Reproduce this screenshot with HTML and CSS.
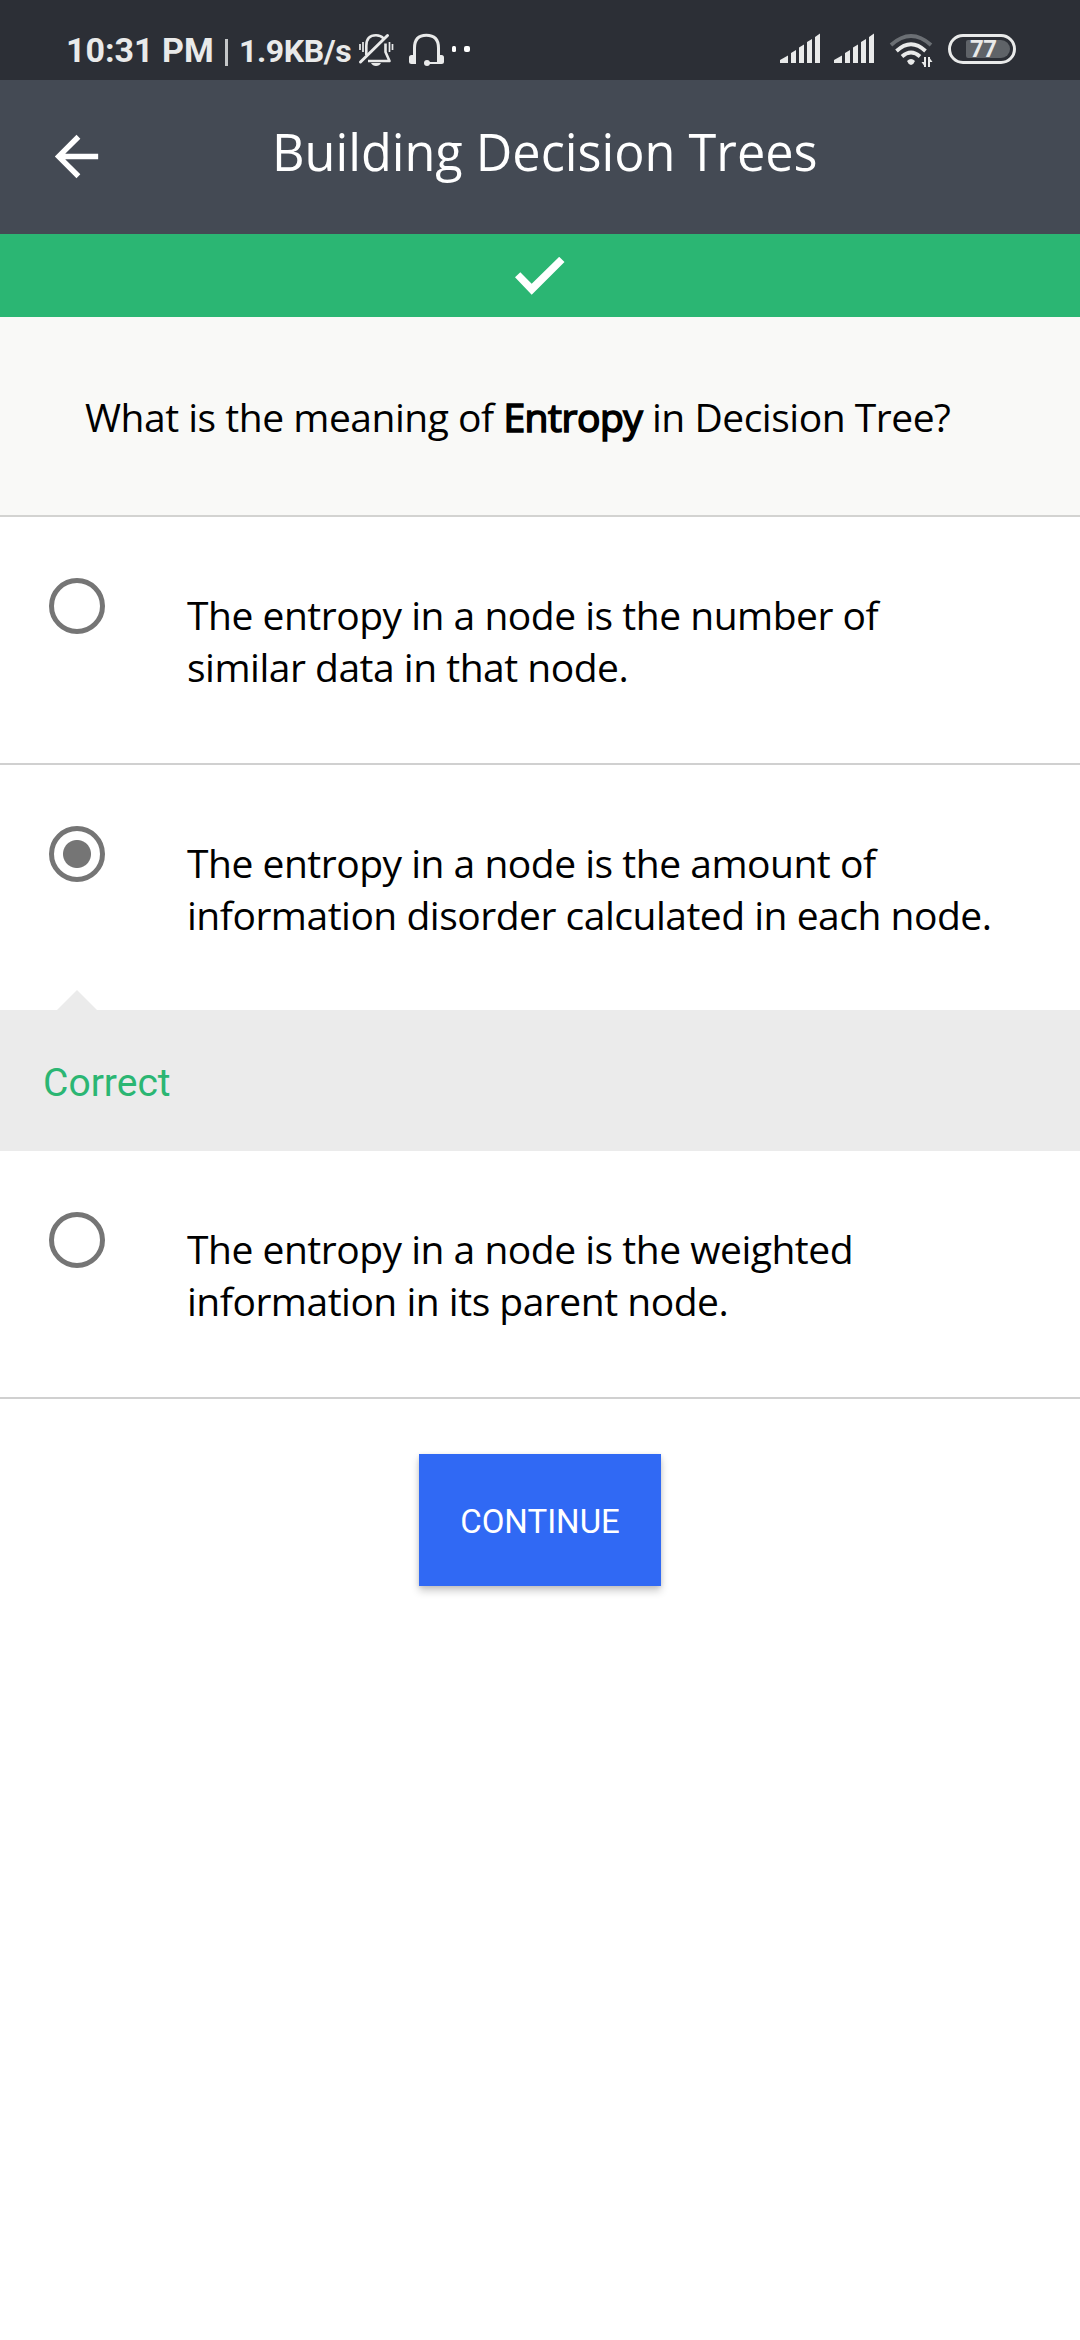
FILE: index.html
```html
<!DOCTYPE html>
<html lang="en">
<head>
<meta charset="utf-8">
<title>Building Decision Trees</title>
<link rel="stylesheet" href="styles.css">
</head>
<body>
<div class="status-bar">
  <span class="clock">10:31 PM</span>
  <span class="divider"></span>
  <span class="speed">1.9KB/s</span>
  <svg class="bell" width="36" height="34" viewBox="358 33 36 34" fill="none" stroke="#e9eaea" stroke-width="2.6">
    <path d="M366.300 55V46C366.300 38 370 35.300 376 35.300C379.500 35.300 382 36.600 383.700 38.500"/>
    <path d="M385.500 43.500V52L389.500 61H368" stroke-linejoin="round"/>
    <path d="M360.500 62L387.500 35.500" stroke-width="3" stroke-linecap="round"/>
    <path d="M360 44V50M363 42V52M389.500 42V52M392.500 44V50" stroke-width="1.700"/>
    <path d="M371 63H381Q379.500 66 376 66T371 63Z" fill="#e9eaea" stroke="none"/>
  </svg>
  <svg class="headset" width="36" height="34" viewBox="408 33 36 34" fill="none" stroke="#e9eaea" stroke-width="3">
    <path d="M414.500 64V48C414.500 39 419 35.300 426.300 35.300S438.500 39 438.500 48V64"/>
    <path d="M427 63H439" stroke-width="2"/>
    <rect x="409" y="55" width="7" height="9" rx="2.500" fill="#e9eaea" stroke="none"/>
    <rect x="437" y="55" width="7" height="9" rx="2.500" fill="#e9eaea" stroke="none"/>
    <circle cx="427" cy="63" r="3" fill="#e9eaea" stroke="none"/>
  </svg>
  <svg class="dots" width="20" height="8" viewBox="451 45 20 8" fill="#fff">
    <rect x="452" y="46" width="4" height="6" rx="1.500"/><rect x="464" y="46" width="6" height="6" rx="2"/>
  </svg>
  <svg class="signal" width="40" height="30" viewBox="0 33 40 30" fill="#e9eaea">
    <path d="M0 60L8 55.500V63H0ZM11 53L16 50V63H11ZM19 47.500L24 44.500V63H19ZM27 42L32 39V63H27ZM35 37L40 33.500V63H35Z"/>
  </svg>
  <svg class="signal" width="40" height="30" viewBox="0 33 40 30" fill="#e9eaea">
    <path d="M0 60L8 55.500V63H0ZM11 53L16 50V63H11ZM19 47.500L24 44.500V63H19ZM27 42L32 39V63H27ZM35 37L40 33.500V63H35Z"/>
  </svg>
  <svg class="wifi" width="44" height="35" viewBox="889 33 44 35" fill="none" stroke="#e9eaea" stroke-width="3.800">
    <path d="M891 45Q911 27 931 45" stroke="#6b6f74"/>
    <path d="M896.500 51Q911 37.500 925.500 51"/>
    <path d="M902 56.500Q911 48.500 920 56.500"/>
    <path d="M907 61Q911 57 915 61Q914 64 911 65Q908 64 907 61Z" fill="#e9eaea" stroke="none"/>
    <path d="M925 57V67M929 57V67" stroke-width="2"/>
    <path d="M921.500 62H925V67ZM932.500 62H929V57Z" fill="#e9eaea" stroke="none"/>
  </svg>
  <span class="battery"><span class="charge">77</span></span>
</div>
<header class="app-bar">
  <svg class="back" width="65" height="65" viewBox="0 0 24 24" fill="#fff"><path d="M20 11H7.830l5.590-5.590L12 4l-8 8 8 8 1.410-1.410L7.830 13H20z"/></svg>
  <h1 class="title">Building Decision Trees</h1>
</header>
<div class="result">
  <svg width="50" height="38" viewBox="515 257 50 38" fill="#fff"><path d="M515 277.300L520.300 272.300L531.700 283.700L559.200 256.800L564.500 262L531.700 294.800Z"/></svg>
</div>
<main>
  <p class="question">What is the meaning of <b>Entropy</b> in Decision Tree?</p>
  <div class="option">
    <span class="radio"></span>
    <p class="answer">The entropy in a node is the number of<br>similar data in that node.</p>
  </div>
  <div class="option option-selected">
    <span class="radio radio-on"></span>
    <p class="answer">The entropy in a node is the amount of<br>information disorder calculated in each node.</p>
  </div>
  <div class="feedback">Correct</div>
  <div class="option">
    <span class="radio"></span>
    <p class="answer">The entropy in a node is the weighted<br>information in its parent node.</p>
  </div>
  <div class="actions"><button class="continue">CONTINUE</button></div>
</main>
</body>
</html>
```
FILE: styles.css
```css
* { box-sizing: border-box; }
body {
  margin: 0;
  min-height: 2340px;
  background: #fff;
  color: #000;
  font-family: "Open Sans", sans-serif;
}
h1, p { margin: 0; font-weight: 400; }
svg { display: block; flex: none; }

.status-bar {
  display: flex;
  align-items: flex-start;
  height: 80px;
  padding: 33px 64px 0 66px;
  background: #2c2f36;
  color: #e9eaea;
  font-family: Roboto, sans-serif;
  font-weight: 700;
  white-space: nowrap;
}
.clock { width: 159px; font-size: 34px; line-height: 34px; }
.divider { width: 3px; height: 27px; margin-top: 6px; background: #c5c7c9; }
.speed { width: 118px; margin-left: 11px; font-size: 32px; line-height: 36px; letter-spacing: -0.4px; }
.bell { margin-left: 1px; }
.headset { margin-left: 14px; }
.dots { margin: 12px 0 0 7px; }
.signal { margin-right: 14px; }
.dots + .signal { margin-left: auto; }
.wifi { margin-left: 1px; }
.battery {
  width: 68px;
  height: 30px;
  margin: 1px 0 0 15px;
  padding: 3px 3px 3px 15px;
  border: 3px solid #e9eaea;
  border-radius: 15px;
}
.charge {
  display: block;
  width: 44px;
  height: 18px;
  padding-left: 4px;
  border-radius: 2px 9px 9px 2px;
  background: #5f6368;
  font-size: 24px;
  line-height: 18px;
  letter-spacing: -0.5px;
}

.app-bar {
  display: flex;
  height: 154px;
  padding: 44px 0 0 44px;
  background: #444a54;
  color: #fff;
}
.title {
  margin: -6px 0 0 163px;
  font-size: 50.4px;
  line-height: 68px;
  white-space: nowrap;
}

.result {
  display: flex;
  justify-content: center;
  height: 83px;
  padding-top: 23px;
  background: #2bb673;
}

.question {
  height: 200px;
  padding: 74px 85px 0;
  border-bottom: 2px solid #d3d3d1;
  background: #f9f9f7;
  font-size: 39px;
  line-height: 52px;
  letter-spacing: -0.48px;
  white-space: nowrap;
}
.question b { font-weight: 400; -webkit-text-stroke: 1.6px #000; }

.option {
  display: flex;
  gap: 82px;
  height: 248px;
  padding: 61px 49px 0;
  border-bottom: 2px solid #d0d0d0;
}
.option-selected { height: 245px; border-bottom: 0; }
.radio {
  flex: none;
  width: 56px;
  height: 56px;
  border: 5px solid #757575;
  border-radius: 50%;
}
.radio-on { background: radial-gradient(circle, #757575 13.500px, transparent 14.500px); }
.answer {
  padding-top: 11px;
  font-size: 39px;
  line-height: 52px;
  letter-spacing: -0.49px;
  white-space: nowrap;
}

.feedback {
  position: relative;
  height: 141px;
  padding: 47px 43px 0;
  background: #ebebeb;
  color: #2bb673;
  font-family: Roboto, sans-serif;
  font-size: 39px;
  line-height: 52px;
}
.feedback::before {
  content: "";
  position: absolute;
  left: 57px;
  bottom: 100%;
  border: 20px solid transparent;
  border-top: 0;
  border-bottom-color: #ebebeb;
}

.actions { display: flex; justify-content: center; padding-top: 55px; }
.continue {
  width: 242px;
  height: 132px;
  padding: 2px 0 0;
  border: 0;
  background: #3069f4;
  box-shadow: 0 5px 8px rgba(0, 0, 0, .2), 0 1px 4px rgba(0, 0, 0, .1);
  color: #fff;
  font-family: Roboto, sans-serif;
  font-size: 33px;
}
```
